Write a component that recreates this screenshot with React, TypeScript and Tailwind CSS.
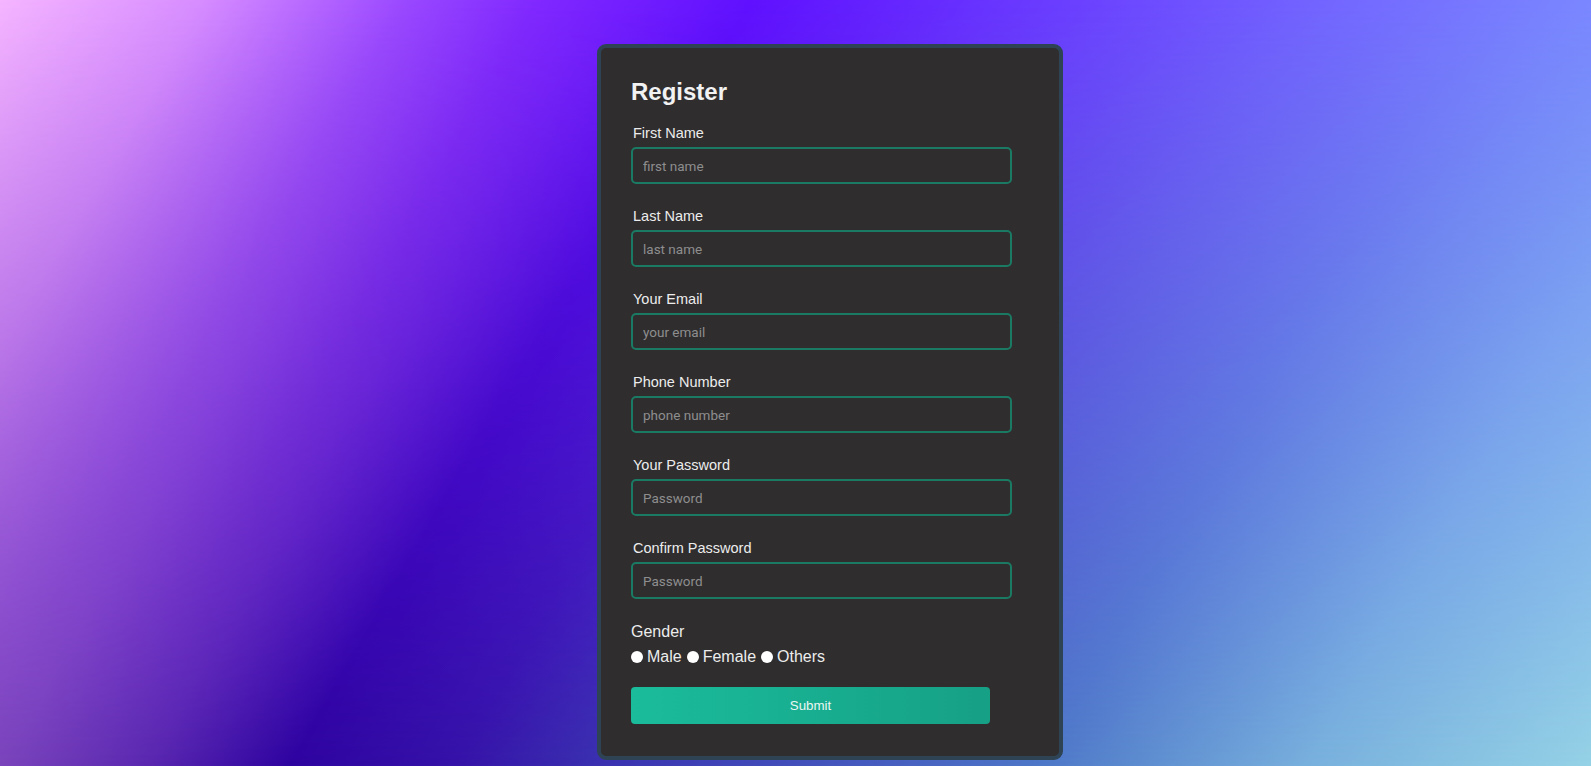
import React from "react";

type Field = {
    label: string;
    placeholder: string;
    type: string;
};

const fields: Field[] = [
    { label: "First Name", placeholder: "first name", type: "text" },
    { label: "Last Name", placeholder: "last name", type: "text" },
    { label: "Your Email", placeholder: "your email", type: "email" },
    { label: "Phone Number", placeholder: "phone number", type: "tel" },
    { label: "Your Password", placeholder: "Password", type: "password" },
    { label: "Confirm Password", placeholder: "Password", type: "password" },
];

const genders = ["Male", "Female", "Others"];

function App() {
    return (
        <div className="relative h-[766px] overflow-hidden bg-[linear-gradient(120deg,#b070d8_0%,#7a44bc_21.75%,#5a28b0_29%,#2e04a0_36%,#3512a8_44%,#3a30b0_51%,#4e78c8_73%,#78b0dd_86%,#95d2e6_100%)] font-['Liberation_Sans',Arial,sans-serif]">
            {/* upper half of the backdrop, faded out toward the bottom */}
            <div className="absolute inset-0 bg-[linear-gradient(120deg,#f5b5ff_0%,#d68cff_10%,#9a48ff_20%,#8028ff_26.5%,#6010ff_37%,#6a3cff_51.5%,#7262ff_64%,#7a86ff_78%,#84b0ff_100%)] [mask-image:linear-gradient(to_bottom,black,transparent)]" />

            <div className="relative flex justify-center pt-[44px] pl-[69px]">
                <form className="w-[466px] rounded-[9px] border-4 border-[#2e4455] bg-[#2f2d2e] px-[30px] pt-[30px] pb-[32px]">
                    <h2 className="mb-[19px] text-[24px] leading-[28px] font-bold text-[#f2f2f2]">Register</h2>

                    {fields.map((field) => (
                        <div key={field.label} className="mb-[24px] flex flex-col">
                            <label className="pl-[2px] text-[14.5px] leading-[17px] text-[#ececec]">
                                {field.label}
                            </label>
                            <input
                                type={field.type}
                                placeholder={field.placeholder}
                                className="mt-[5px] h-[37px] w-[381px] rounded-[5px] border-2 border-[#1a7a63] bg-transparent px-[10px] font-['Roboto',sans-serif] text-[13.5px] text-[#eeeeee] outline-none placeholder:text-[#8e8e8e]"
                            />
                        </div>
                    ))}

                    <div className="mt-[2px] text-[16px] leading-[18px] text-[#ececec]">Gender</div>
                    <div className="mt-[7px] flex items-center text-[16px] leading-[18px] text-[#ececec]">
                        {genders.map((g) => (
                            <label key={g} className="mr-[5px] flex items-center">
                                <input
                                    type="radio"
                                    name="gender"
                                    className="m-0 mr-[4px] h-[12px] w-[12px] appearance-none rounded-full bg-white"
                                />
                                {g}
                            </label>
                        ))}
                    </div>

                    <button
                        type="button"
                        className="mt-[21px] h-[37px] w-[359px] rounded-[4px] bg-linear-to-r from-[#1abc9c] to-[#16a085] text-[13.33px] text-[#eaf6f2]"
                    >
                        Submit
                    </button>
                </form>
            </div>
        </div>
    );
}

export default App;
